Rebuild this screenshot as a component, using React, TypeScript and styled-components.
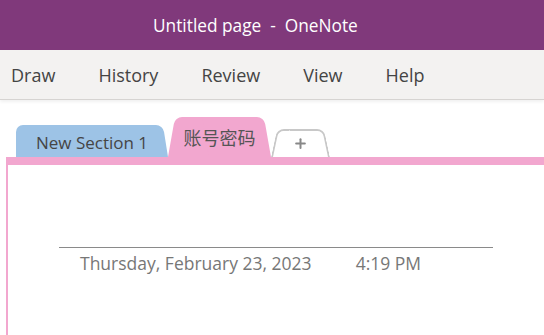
import React from 'react';
import styled, { createGlobalStyle } from 'styled-components';
import { Plus } from 'lucide-react';

const GlobalStyle = createGlobalStyle`
  html, body {
    margin: 0;
    padding: 0;
    background: #fff;
    font-family: "Open Sans", "Noto Sans", "Noto Sans CJK SC", sans-serif;
  }
`;

const Window = styled.div`
  width: 544px;
  height: 335px;
  display: flex;
  flex-direction: column;
  overflow: hidden;
  background: #fff;
`;

const TitleBar = styled.div`
  height: 50px;
  flex-shrink: 0;
  background: #80397b;
  color: #fff;
  display: flex;
  align-items: center;
  padding-left: 153px;
  font-size: 17.3px;
  white-space: pre;
`;

const MenuBar = styled.div`
  height: 49px;
  flex-shrink: 0;
  background: #f3f2f1;
  border-bottom: 1px solid #d6d4d2;
  box-shadow: 0 2px 3px rgba(0, 0, 0, 0.06);
  display: flex;
  align-items: center;
  gap: 43px;
  padding-left: 11px;
  position: relative;
  z-index: 1;
`;

const MenuItem = styled.span`
  font-size: 18px;
  color: #444;
`;

const Notebook = styled.div`
  flex: 1;
  display: flex;
  flex-direction: column;
  padding-top: 17px;
`;

const TabStrip = styled.div`
  display: flex;
  align-items: flex-end;
  padding-left: 16px;
  height: 40px;
`;

const Tab = styled.div<{ $bg: string; $h: number; $w: number; $slant: number; $leftSlant?: boolean }>`
  position: relative;
  isolation: isolate;
  width: ${(p) => p.$w}px;
  height: ${(p) => p.$h}px;
  display: flex;
  align-items: center;
  justify-content: center;
  font-size: 17px;
  color: #454545;
  padding-top: 2px;
  box-sizing: border-box;

  &::before,
  &::after {
    content: '';
    position: absolute;
    top: 0;
    bottom: 0;
    width: 60%;
    background: ${(p) => p.$bg};
    transform-origin: bottom;
    z-index: -1;
  }
  &::before {
    left: 0;
    border-top-left-radius: 7px;
    transform: skewX(${(p) => (p.$leftSlant ? -p.$slant : 0)}deg);
  }
  &::after {
    right: 0;
    border-top-right-radius: 7px;
    transform: skewX(${(p) => p.$slant}deg);
  }
`;

const ActiveLabel = styled.span`
  font-size: 18px;
  color: #555;
  margin-top: -2px;
`;

const AddTab = styled.div`
  position: relative;
  isolation: isolate;
  width: 59px;
  height: 28px;
  display: flex;
  align-items: center;
  justify-content: center;
  color: #888;

  &::before,
  &::after {
    content: '';
    position: absolute;
    top: 0;
    bottom: 0;
    width: 60%;
    background: #fff;
    border-top: 2px solid #c8c8c8;
    box-sizing: border-box;
    transform-origin: bottom;
    z-index: -1;
  }
  &::before {
    left: 0;
    border-left: 2px solid #c8c8c8;
    border-top-left-radius: 7px;
    transform: skewX(-12deg);
  }
  &::after {
    right: 0;
    border-right: 2px solid #c8c8c8;
    border-top-right-radius: 7px;
    transform: skewX(12deg);
  }
`;

const PageFrame = styled.div`
  flex: 1;
  margin-left: 6px;
  border-top: 8px solid #f2a7cf;
  border-left: 2px solid #f2a7cf;
  background: #fff;
  padding: 82px 0 0 51px;
`;

const PageTitle = styled.div`
  width: 434px;
  box-sizing: border-box;
  border-top: 1px solid #8a8a8a;
  padding: 3px 0 0 21px;
  display: flex;
  gap: 44px;
  font-family: "Open Sans", sans-serif;
  font-size: 17.5px;
  color: #777;
`;

const tabs = ['Draw', 'History', 'Review', 'View', 'Help'];

export default function App() {
  return (
    <>
      <GlobalStyle />
      <Window>
        <TitleBar>Untitled page  -  OneNote</TitleBar>
        <MenuBar>
          {tabs.map((t) => (
            <MenuItem key={t}>{t}</MenuItem>
          ))}
        </MenuBar>
        <Notebook>
          <TabStrip>
            <Tab $bg="#9dc3e6" $h={32} $w={152} $slant={9}>
              New Section 1
            </Tab>
            <Tab $bg="#f2a7cf" $h={40} $w={103} $slant={10} $leftSlant>
              <ActiveLabel>账号密码</ActiveLabel>
            </Tab>
            <AddTab>
              <Plus size={15} strokeWidth={3.2} />
            </AddTab>
          </TabStrip>
          <PageFrame>
            <PageTitle>
              <span>Thursday, February 23, 2023</span>
              <span>4:19 PM</span>
            </PageTitle>
          </PageFrame>
        </Notebook>
      </Window>
    </>
  );
}
